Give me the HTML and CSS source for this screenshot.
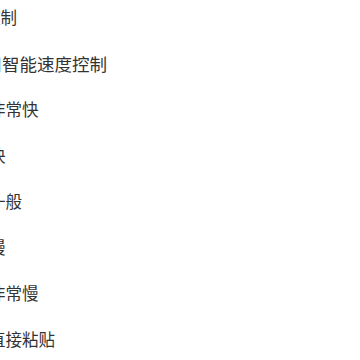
FILE: index.html
```html
<!DOCTYPE html>
<html lang="zh-CN">
<head>
    <meta charset="UTF-8">
    <meta name="viewport" content="width=device-width, initial-scale=1.0">
    <title>速度控制</title>
    <link rel="stylesheet" href="styles.css">
</head>
<body>
    <div class="settings">
        <div class="row title"><span>速度控制</span></div>
        <div class="row switch"><span>启用智能速度控制</span></div>
        <div class="row"><span>非常快</span></div>
        <div class="row"><span>快</span></div>
        <div class="row"><span>一般</span></div>
        <div class="row"><span>慢</span></div>
        <div class="row"><span>非常慢</span></div>
        <div class="row"><span>直接粘贴</span></div>
    </div>
</body>
</html>
```

FILE: styles.css
```css
html, body {
    margin: 0;
    background: #ffffff;
}
body {
    font-family: "Noto Sans CJK SC", "Noto Sans", sans-serif;
    color: #333333;
    overflow: hidden;
}
.settings {
    margin-top: -6px;
    margin-left: -11px;
}
.row {
    height: 46px;
    display: flex;
    align-items: center;
    font-size: 16.5px;
    white-space: nowrap;
}
.row.title {
    margin-left: -38px;
}
.row.switch {
    margin-left: -22px;
    font-size: 17.5px;
}
```
